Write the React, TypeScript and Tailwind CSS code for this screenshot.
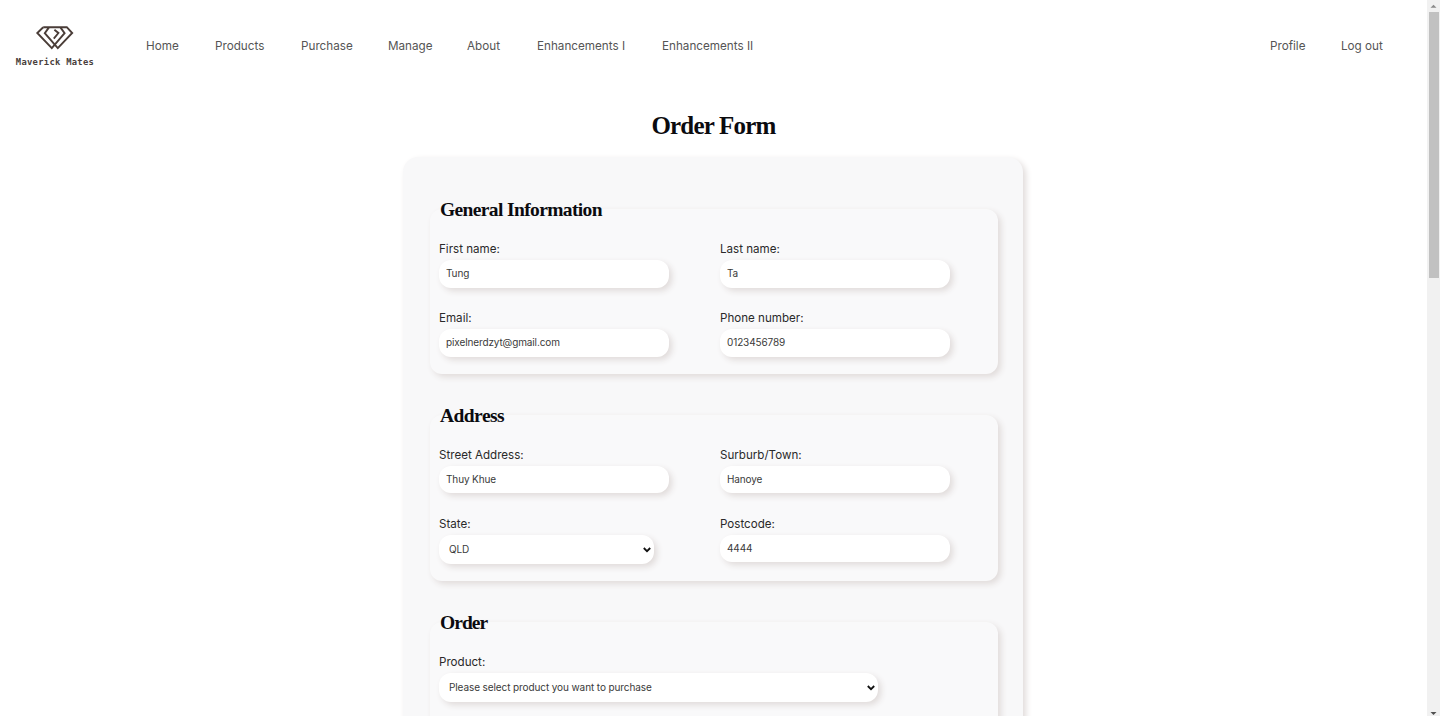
import type { ReactNode } from "react";

const leftNav = [
  { label: "Home", width: "w-[33px]" },
  { label: "Products", width: "w-[50px]" },
  { label: "Purchase", width: "w-[51px]" },
  { label: "Manage", width: "w-[43px]" },
  { label: "About", width: "w-[34px]" },
  { label: "Enhancements I", width: "w-[89px]" },
  { label: "Enhancements II", width: "w-[92px]" },
];

function Logo() {
  return (
    <a href="#" className="flex w-[110px] flex-col items-center">
      <svg width="40" height="26" viewBox="0 0 40 26" fill="none" stroke="#4a3d38" strokeWidth="1.9">
        <path d="M8.2 2.2H31.8L37.2 8L22.8 23.2L9.8 8.2L13.8 2.6" />
        <path d="M8.2 2.2L2.3 8L16.8 23.2L29.6 8.2L25.6 2.6" />
        <path d="M19.4 4.8L23.4 8L18.8 13.6" />
      </svg>
      <span className="mt-[5px] font-['DejaVu_Sans_Mono',monospace] text-[8.8px] leading-[12px] font-bold tracking-[0.3px] whitespace-nowrap text-[#4a403c]">
        Maverick Mates
      </span>
    </a>
  );
}

function Field({ label, children }: { label: string; children: ReactNode }) {
  return (
    <label className="flex flex-col items-start text-[11.6px] leading-[18px] text-[#2a2a2a]">
      <span className="mb-[2px] whitespace-nowrap">{label}</span>
      {children}
    </label>
  );
}

function TextInput({ value }: { value: string }) {
  return (
    <input
      type="text"
      defaultValue={value}
      className="h-[27.5px] w-[230px] rounded-[12px] bg-white px-[7px] pb-[1px] text-[10px] tracking-[-0.12px] text-[#3a3a3a] shadow-[3px_3px_6px_#e0dbda] outline-none"
    />
  );
}

function SelectInput({ value, width }: { value: string; width: string }) {
  return (
    <span className={`relative block ${width}`}>
      <select className="block h-[29.5px] w-full appearance-none rounded-[12px] bg-white px-[10px] pb-[1px] text-[10px] tracking-[-0.1px] text-[#3a3a3a] shadow-[3px_3px_6px_#e0dbda] outline-none">
        <option>{value}</option>
      </select>
      <svg
        className="pointer-events-none absolute top-[12px] right-[3px]"
        width="8"
        height="6"
        viewBox="0 0 8 6"
        fill="none"
        stroke="#111"
        strokeWidth="1.8"
      >
        <path d="M0.8 1L4 4.2L7.2 1" />
      </svg>
    </span>
  );
}

function Section({ title, tracking, className, children }: { title: string; tracking: string; className: string; children: ReactNode }) {
  return (
    <section className={`rounded-[12px] bg-[#f9f9fa] pl-[9px] shadow-[3px_3px_6px_#e0dbda] ${className}`}>
      <h2 className={`relative top-[-11px] h-6 pl-[1px] font-['Liberation_Serif',serif] text-[19.5px] leading-6 font-bold text-[#0b0b0f] ${tracking}`}>
        {title}
      </h2>
      {children}
    </section>
  );
}

function Scrollbar() {
  return (
    <div className="flex h-full w-[13px] flex-col items-center bg-[#f1f1f1]">
      <svg width="13" height="12" viewBox="0 0 13 12" fill="#8a8a8a">
        <path d="M3.5 7.8L6.5 4.8L9.5 7.8Z" />
      </svg>
      <div className="h-[266px] w-[10px] bg-[#c1c1c1]" />
      <svg className="mt-auto" width="13" height="12" viewBox="0 0 13 12" fill="#505050">
        <path d="M3.5 8L6.5 11L9.5 8Z" />
      </svg>
    </div>
  );
}

export default function App() {
  return (
    <div className="flex h-[716px] w-[1440px] overflow-hidden bg-white font-['Inter',sans-serif]">
      <div className="flex h-full w-[1427px] flex-col overflow-hidden">
        <header className="flex h-[92px] shrink-0 items-center pr-[45px] text-[11.7px] text-[#555]">
          <Logo />
          <nav className="ml-[36px] flex gap-9 pt-[2px]">
            {leftNav.map((item) => (
              <a key={item.label} href="#" className={`whitespace-nowrap ${item.width}`}>
                {item.label}
              </a>
            ))}
          </nav>
          <nav className="ml-auto flex gap-9 pt-[2px]">
            <a href="#" className="w-[35px] whitespace-nowrap">Profile</a>
            <a href="#" className="w-[41px] whitespace-nowrap">Log out</a>
          </nav>
        </header>

        <h1 className="mt-[18px] text-center font-['Liberation_Serif',serif] text-[25px] leading-8 font-bold tracking-[-0.8px] text-[#0b0b0f]">
          Order Form
        </h1>

        <main className="mr-auto ml-[403px] mt-[15px] h-[800px] w-[620px] shrink-0 rounded-[15px] bg-[#f8f8f9] px-[27px] pt-[52px] shadow-[3px_3px_6px_#e0dbda]">
          <div className="flex w-[568px] flex-col">
            <Section title="General Information" tracking="tracking-[-0.63px]" className="h-[165px]">
              <div className="mt-[7px] grid grid-cols-[281px_230px] gap-y-[21.5px]">
                <Field label="First name:"><TextInput value="Tung" /></Field>
                <Field label="Last name:"><TextInput value="Ta" /></Field>
                <Field label="Email:"><TextInput value="pixelnerdzyt@gmail.com" /></Field>
                <Field label="Phone number:"><TextInput value="0123456789" /></Field>
              </div>
            </Section>

            <Section title="Address" tracking="tracking-[-0.55px]" className="mt-[40.6px] h-[166.4px]">
              <div className="mt-[7px] grid grid-cols-[281px_230px] gap-y-[21.5px]">
                <Field label="Street Address:"><TextInput value="Thuy Khue" /></Field>
                <Field label="Surburb/Town:"><TextInput value="Hanoye" /></Field>
                <Field label="State:"><SelectInput value="QLD" width="w-[215px]" /></Field>
                <Field label="Postcode:"><TextInput value="4444" /></Field>
              </div>
            </Section>

            <Section title="Order" tracking="tracking-[-0.95px]" className="mt-[40.6px] h-[300px]">
              <div className="mt-[7px]">
                <Field label="Product:">
                  <SelectInput value="Please select product you want to purchase" width="w-[439px]" />
                </Field>
              </div>
            </Section>
          </div>
        </main>
      </div>
      <Scrollbar />
    </div>
  );
}
